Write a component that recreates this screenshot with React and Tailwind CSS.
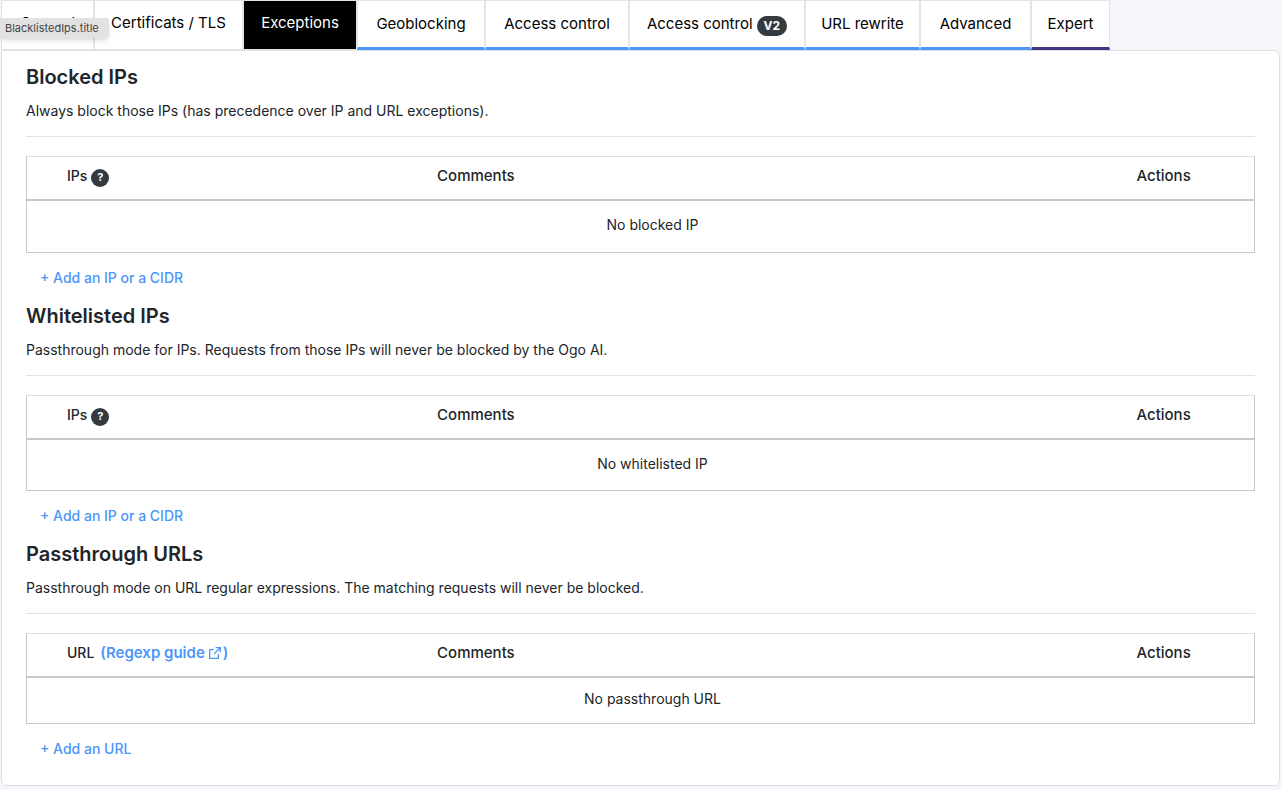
import { RiExternalLinkLine } from "react-icons/ri";

const tabs = [
  { label: "General", width: "w-[93px]", edge: "plain" },
  { label: "Certificats / TLS", width: "w-[149px]", edge: "plain" },
  { label: "Exceptions", width: "w-[114px]", edge: "active" },
  { label: "Geoblocking", width: "w-[128px]", edge: "blue" },
  { label: "Access control", width: "w-[144px]", edge: "blue" },
  { label: "Access control", width: "w-[176px]", edge: "blue", badge: "V2" },
  { label: "URL rewrite", width: "w-[115px]", edge: "blue" },
  { label: "Advanced", width: "w-[111px]", edge: "blue" },
  { label: "Expert", width: "w-[79px]", edge: "purple" },
];

const edges = {
  plain: "bg-white text-black border-b border-b-[#e4e4e4] pb-1",
  active: "bg-black text-white border-b border-b-[#e4e4e4] pb-1",
  blue: "bg-white text-black border-b-3 border-b-[#4b96fa]",
  purple: "bg-white text-black border-b-3 border-b-[#453480]",
};

function Tab({ label, width, edge, badge }) {
  return (
    <button
      type="button"
      role="tab"
      aria-selected={edge === "active"}
      className={`flex h-[50px] shrink-0 items-center justify-center gap-1 whitespace-nowrap border-x border-t border-x-[#e4e4e4] border-t-[#e4e4e4] text-[15px] leading-6 ${width} ${edges[edge]}`}
    >
      {label}
      {badge && (
        <span className="mt-1 rounded-full bg-[#343a40] px-[7px] text-xs leading-5 font-bold text-white">
          {badge}
        </span>
      )}
    </button>
  );
}

function Help() {
  return (
    <button
      type="button"
      aria-label="Help"
      className="mt-1 flex size-[18px] items-center justify-center rounded-full bg-[#343a40] pb-0.5 text-[11px] leading-4 font-bold text-white"
    >
      ?
    </button>
  );
}

function Section({ title, text, head, empty, add, rowHeight }) {
  return (
    <section>
      <h2 className="text-xl leading-6 font-semibold">{title}</h2>
      <p className="mt-[11px] text-sm leading-[21px]">{text}</p>
      <hr className="mt-[15px] border-[#e2e2e5]" />
      <table className="mt-[19px] w-full table-fixed border-separate border-spacing-0 border border-[#c8c8c8] border-t-[#dcdfe6] text-sm leading-[21px]">
        <thead>
          <tr className="h-11 text-left align-top">
            <th className="w-[30%] border-b-2 border-[#c8c8c8] pt-2 pl-10 font-medium">
              <div className="flex h-[21px] items-center gap-1">{head}</div>
            </th>
            <th className="w-[57%] border-b-2 border-[#c8c8c8] pt-2 pl-[42px] text-[15px] font-medium">Comments</th>
            <th className="w-[13%] border-b-2 border-[#c8c8c8] pt-2 pl-[42px] text-[15px] font-medium">Actions</th>
          </tr>
        </thead>
        <tbody>
          <tr>
            <td colSpan={3} className={`pb-1 pl-6 text-center ${rowHeight}`}>
              {empty}
            </td>
          </tr>
        </tbody>
      </table>
      <button type="button" className="mt-3.5 mb-px ml-3.5 block text-sm leading-[21px] font-medium text-[#4b96fa]">
        + {add}
      </button>
    </section>
  );
}

export default function App() {
  return (
    <div className="relative min-h-screen bg-[#f5f6fa] px-px font-['Inter',sans-serif] text-[#212529]">
      <div role="tablist" className="flex">
        {tabs.map((tab, i) => (
          <Tab key={i} {...tab} />
        ))}
      </div>
      <main className="mr-px flex flex-col gap-[15px] rounded-b-md rounded-tr-md border border-[#dcdfe3] bg-white px-6 pt-3.5 pb-[25px]">
        <Section
          title="Blocked IPs"
          text="Always block those IPs (has precedence over IP and URL exceptions)."
          head={<>IPs <Help /></>}
          empty="No blocked IP"
          add="Add an IP or a CIDR"
          rowHeight="h-[51px]"
        />
        <Section
          title="Whitelisted IPs"
          text="Passthrough mode for IPs. Requests from those IPs will never be blocked by the Ogo AI."
          head={<>IPs <Help /></>}
          empty="No whitelisted IP"
          add="Add an IP or a CIDR"
          rowHeight="h-[50px]"
        />
        <Section
          title="Passthrough URLs"
          text="Passthrough mode on URL regular expressions. The matching requests will never be blocked."
          head={
            <>
              URL
              <a href="#regexp-guide" className="ml-0.5 flex items-center text-[15px] font-semibold text-[#4b96fa]">
                (Regexp guide
                <RiExternalLinkLine className="ml-0.5 size-4" />)
              </a>
            </>
          }
          empty="No passthrough URL"
          add="Add an URL"
          rowHeight="h-[45px]"
        />
      </main>
      <div
        role="tooltip"
        className="absolute top-[18px] left-0 rounded-r-xs bg-[#e2e2e2] pr-2.5 pl-[5px] text-[11px] leading-5 text-[#444444] shadow-md"
      >
        BlacklistedIps.title
      </div>
    </div>
  );
}
